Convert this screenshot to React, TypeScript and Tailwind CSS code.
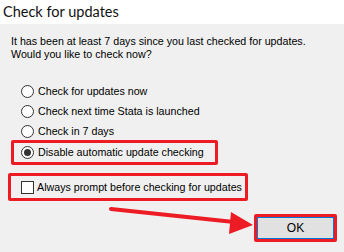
import React from 'react'

function Radio({ checked }: { checked?: boolean }) {
  return (
    <span className="w-[13px] h-[13px] rounded-full border border-[#333333] bg-white flex items-center justify-center shrink-0">
      {checked && <span className="w-[7px] h-[7px] rounded-full bg-[#333333]" />}
    </span>
  )
}

export default function App() {
  return (
    <div className="relative w-[344px] h-[252px] overflow-hidden bg-[#f0f0f0] text-black text-[10.7px] font-['Liberation_Sans',Arial,sans-serif] whitespace-nowrap">
      <div className="h-[24px] bg-white flex items-center pl-[3px] text-[14.5px] text-[#111] font-['Lato',sans-serif]">
        Check for updates
      </div>

      <div className="flex flex-col pl-[11px]">
        <div className="pt-[11px] leading-[13px]">
          <p>It has been at least 7 days since you last checked for updates.</p>
          <p>Would you like to check now?</p>
        </div>

        <div className="mt-[20px] h-[20px] flex items-center gap-[4px] pl-[10px]">
          <Radio />
          <span>Check for updates now</span>
        </div>
        <div className="h-[21px] flex items-center gap-[4px] pl-[10px]">
          <Radio />
          <span>Check next time Stata is launched</span>
        </div>
        <div className="h-[18px] flex items-center gap-[4px] pl-[10px]">
          <Radio />
          <span>Check in 7 days</span>
        </div>

        <div className="h-[25px] w-[207px] border-[3px] border-[#ed1c24] rounded-[2px] flex items-center gap-[4px] pl-[7px]">
          <Radio checked />
          <span>Disable automatic update checking</span>
        </div>

        <div className="mt-[8px] ml-[-3px] h-[28px] w-[240px] border-[3px] border-[#ed1c24] rounded-[2px] flex items-center gap-[3px] pl-[10px]">
          <span className="w-[13px] h-[13px] border border-[#333333] bg-white shrink-0" />
          <span>Always prompt before checking for updates</span>
        </div>

        <div className="mt-[13px] self-end mr-[7px] w-[83px] h-[28px] border-[3px] border-[#ed1c24] rounded-[2px] flex">
          <button className="flex-1 border border-[#0078d7] bg-[#e1e1e1] text-[12px] leading-none">OK</button>
        </div>
      </div>

      <svg className="absolute left-0 top-0 pointer-events-none" width="344" height="252">
        <line x1="111" y1="209" x2="234" y2="222" stroke="#ed1c24" strokeWidth="4" strokeLinecap="round" />
        <polygon points="253,225 231,212 229,234" fill="#ed1c24" />
      </svg>
    </div>
  )
}
